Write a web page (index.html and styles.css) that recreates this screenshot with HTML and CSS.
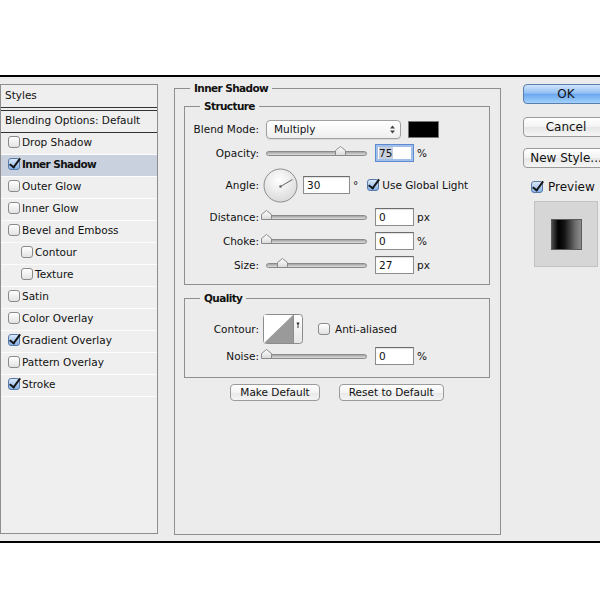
FILE: index.html
```html
<!DOCTYPE html>
<html>
<head>
<meta charset="utf-8">
<title>Layer Style</title>
<link rel="stylesheet" href="styles.css">
</head>
<body>
<div class="top"></div>
<div class="dialog">
  <div class="panel">
    <div class="phead">Styles</div>
    <div class="blend">Blending Options: Default</div>
    <div class="row"><span class="cb"></span>Drop Shadow</div>
    <div class="row sel"><span class="cb on"></span>Inner Shadow</div>
    <div class="row"><span class="cb"></span>Outer Glow</div>
    <div class="row"><span class="cb"></span>Inner Glow</div>
    <div class="row"><span class="cb"></span>Bevel and Emboss</div>
    <div class="row sub"><span class="cb"></span>Contour</div>
    <div class="row sub"><span class="cb"></span>Texture</div>
    <div class="row"><span class="cb"></span>Satin</div>
    <div class="row"><span class="cb"></span>Color Overlay</div>
    <div class="row"><span class="cb on"></span>Gradient Overlay</div>
    <div class="row"><span class="cb"></span>Pattern Overlay</div>
    <div class="row"><span class="cb on"></span>Stroke</div>
  </div>

  <fieldset class="fs outer">
    <legend>Inner Shadow</legend>
    <div class="outer-body">
      <fieldset class="fs">
        <legend>Structure</legend>
        <div class="structure-body">
          <div class="frow">
            <span class="lbl">Blend Mode:</span>
            <div class="select"><span>Multiply</span>
              <svg class="arrows" width="5" height="9" viewBox="0 0 5 9"><path d="M0 3.5L2.5 0.5L5 3.5Z M0 5.5L2.5 8.5L5 5.5Z" fill="#444"/></svg>
            </div>
            <span class="swatch"></span>
          </div>
          <div class="frow">
            <span class="lbl">Opacity:</span>
            <div class="slider"><svg class="thumb" style="left:75%" width="11" height="10" viewBox="0 0 11 10"><defs><linearGradient id="tg1" x1="0" y1="0" x2="0" y2="1"><stop offset="0" stop-color="#fff"/><stop offset="1" stop-color="#d9d9d9"/></linearGradient></defs><path d="M0.5 9.5V4.5L5.5 0.5L10.5 4.5V9.5Z" fill="url(#tg1)" stroke="#8a8a8a"/></svg></div>
            <div class="num focus"><span class="hl">75</span></div>
            <span class="unit">%</span>
          </div>
          <div class="frow tall">
            <span class="lbl">Angle:</span>
            <svg class="dial" width="35" height="35" viewBox="0 0 35 35">
              <defs><radialGradient id="dg" cx="0.45" cy="0.35" r="0.7"><stop offset="0" stop-color="#ffffff"/><stop offset="1" stop-color="#d8d8d8"/></radialGradient></defs>
              <circle cx="17.5" cy="17.5" r="16.5" fill="url(#dg)" stroke="#8d8d8d"/>
              <line x1="17.5" y1="18.5" x2="29.5" y2="11.5" stroke="#666" stroke-width="1"/>
              <circle cx="17.5" cy="18.5" r="1.3" fill="#666"/>
            </svg>
            <div class="num wide">30</div>
            <span class="deg">°</span>
            <span class="cb on gl"></span>
            <span class="gltext">Use Global Light</span>
          </div>
          <div class="frow">
            <span class="lbl">Distance:</span>
            <div class="slider"><svg class="thumb" style="left:0%" width="11" height="10" viewBox="0 0 11 10"><defs><linearGradient id="tg2" x1="0" y1="0" x2="0" y2="1"><stop offset="0" stop-color="#fff"/><stop offset="1" stop-color="#d9d9d9"/></linearGradient></defs><path d="M0.5 9.5V4.5L5.5 0.5L10.5 4.5V9.5Z" fill="url(#tg2)" stroke="#8a8a8a"/></svg></div>
            <div class="num">0</div>
            <span class="unit">px</span>
          </div>
          <div class="frow">
            <span class="lbl">Choke:</span>
            <div class="slider"><svg class="thumb" style="left:0%" width="11" height="10" viewBox="0 0 11 10"><defs><linearGradient id="tg3" x1="0" y1="0" x2="0" y2="1"><stop offset="0" stop-color="#fff"/><stop offset="1" stop-color="#d9d9d9"/></linearGradient></defs><path d="M0.5 9.5V4.5L5.5 0.5L10.5 4.5V9.5Z" fill="url(#tg3)" stroke="#8a8a8a"/></svg></div>
            <div class="num">0</div>
            <span class="unit">%</span>
          </div>
          <div class="frow">
            <span class="lbl">Size:</span>
            <div class="slider"><svg class="thumb" style="left:16%" width="11" height="10" viewBox="0 0 11 10"><defs><linearGradient id="tg4" x1="0" y1="0" x2="0" y2="1"><stop offset="0" stop-color="#fff"/><stop offset="1" stop-color="#d9d9d9"/></linearGradient></defs><path d="M0.5 9.5V4.5L5.5 0.5L10.5 4.5V9.5Z" fill="url(#tg4)" stroke="#8a8a8a"/></svg></div>
            <div class="num">27</div>
            <span class="unit">px</span>
          </div>
        </div>
      </fieldset>

      <fieldset class="fs quality">
        <legend>Quality</legend>
        <div class="quality-body">
          <div class="frow contour-row">
            <span class="lbl">Contour:</span>
            <svg class="contour" width="40" height="30" viewBox="0 0 40 30">
              <defs><linearGradient id="cg" x1="0" y1="0" x2="0" y2="1"><stop offset="0" stop-color="#fff"/><stop offset="1" stop-color="#e6e6e6"/></linearGradient></defs>
              <rect x="0.5" y="0.5" width="39" height="29" rx="3" fill="url(#cg)" stroke="#8c8c8c"/>
              <rect x="1" y="1" width="29" height="28" fill="#fff"/>
              <path d="M1 29L30 1V29Z" fill="#9a9a9a"/>
              <line x1="30.5" y1="1" x2="30.5" y2="29" stroke="#8c8c8c"/>
              <path d="M33.5 8.5h3l-1.5 4z" fill="#333"/>
              <line x1="35" y1="12" x2="35" y2="14" stroke="#333"/>
            </svg>
            <span class="cb aa"></span>
            <span class="aatext">Anti-aliased</span>
          </div>
          <div class="frow">
            <span class="lbl">Noise:</span>
            <div class="slider"><svg class="thumb" style="left:0%" width="11" height="10" viewBox="0 0 11 10"><defs><linearGradient id="tg5" x1="0" y1="0" x2="0" y2="1"><stop offset="0" stop-color="#fff"/><stop offset="1" stop-color="#d9d9d9"/></linearGradient></defs><path d="M0.5 9.5V4.5L5.5 0.5L10.5 4.5V9.5Z" fill="url(#tg5)" stroke="#8a8a8a"/></svg></div>
            <div class="num">0</div>
            <span class="unit">%</span>
          </div>
        </div>
      </fieldset>

      <div class="btnrow">
        <button class="btn">Make Default</button>
        <button class="btn">Reset to Default</button>
      </div>
    </div>
  </fieldset>

  <div class="side">
    <div class="pbtn ok">OK</div>
    <div class="pbtn cancel">Cancel</div>
    <div class="pbtn newstyle">New Style...</div>
    <div class="prev-row"><span class="cb on"></span><span>Preview</span></div>
    <div class="preview"><span class="pv"></span></div>
  </div>
</div>
</body>
</html>
```
FILE: styles.css
```css
* { box-sizing: border-box; }
html, body { margin: 0; background: #fff; }
body {
  width: 600px;
  height: 600px;
  overflow: hidden;
  font-family: "DejaVu Sans", "Liberation Sans", sans-serif;
  font-size: 10.5px;
  color: #111;
}
.top { height: 75px; }
.dialog {
  display: flex;
  align-items: flex-start;
  width: 640px;
  height: 468px;
  border-top: 2px solid #000;
  border-bottom: 2px solid #000;
  background: #ececec;
}

/* left styles list */
.panel {
  flex: none;
  width: 158px;
  height: 450px;
  margin-top: 7px;
  border: 1px solid #8e8e8e;
  background: #efefef;
}
.phead {
  height: 23px;
  border-bottom: 1px solid #333;
  padding: 0 0 2px 4px;
  display: flex;
  align-items: center;
}
.blend {
  margin-top: 2px;
  height: 23px;
  border-top: 1px solid #333;
  border-bottom: 1px solid #333;
  padding: 0 0 3px 4px;
  display: flex;
  align-items: center;
}
.row {
  height: 22px;
  border-bottom: 1px solid #fcfcfc;
  display: flex;
  align-items: center;
  padding: 0 0 3px 7px;
  gap: 2px;
}
.row.sub { padding-left: 20px; }
.row.sel {
  background: #c8d1dd;
  font-weight: bold;
  letter-spacing: -0.6px;
}

/* checkbox */
.cb {
  flex: none;
  position: relative;
  width: 12px;
  height: 12px;
  border: 1px solid #8a8a8a;
  border-radius: 3px;
  background: linear-gradient(#ffffff, #e2e2e2);
}
.cb.on {
  background: linear-gradient(#d9e8fa, #86b0e6);
  border-color: #587aa8;
}
.cb.on::after {
  content: "";
  position: absolute;
  left: 3px;
  top: -3px;
  width: 4px;
  height: 10px;
  border: solid #151515;
  border-width: 0 2px 2px 0;
  transform: rotate(36deg);
}

/* fieldsets */
.fs {
  margin: 0;
  padding: 0;
  border: 1px solid #8f8f8f;
  min-width: 0;
}
.fs > legend {
  margin-left: 15px;
  padding: 0 4px;
  font-weight: bold;
  letter-spacing: -0.6px;
  line-height: 14px;
}
.outer {
  flex: none;
  width: 327px;
  height: 454px;
  margin: 4px 0 0 16px;
}
.outer-body { padding: 4px 10px 0 9px; }
.structure-body { padding: 4px 0 7px 0; }
.quality { margin-top: 6px; }
.quality-body { padding: 8px 0 9px 0; }

.frow {
  display: flex;
  align-items: center;
  height: 24px;
}
.frow.tall { height: 40px; }
.frow.contour-row { height: 31px; }
.lbl {
  flex: none;
  width: 74px;
  text-align: right;
}

.select {
  flex: none;
  width: 135px;
  height: 19px;
  margin-left: 7px;
  padding: 0 5px 0 7px;
  border: 1px solid #a0a0a0;
  border-radius: 4px;
  background: linear-gradient(#ffffff, #efefef);
  box-shadow: 0 1px 1px rgba(0, 0, 0, 0.08);
  display: flex;
  align-items: center;
  justify-content: space-between;
}
.swatch {
  flex: none;
  width: 31px;
  height: 17px;
  margin-left: 7px;
  background: #000;
  border: 1px solid #777;
}

.slider {
  flex: none;
  position: relative;
  width: 101px;
  height: 5px;
  margin-left: 7px;
  border: 1px solid #8a8a8a;
  border-radius: 3px;
  background: linear-gradient(#a4a4a4, #dddddd);
}
.thumb {
  position: absolute;
  top: -6px;
  margin-left: -6px;
}

.num {
  flex: none;
  width: 39px;
  height: 18px;
  margin-left: 8px;
  padding-left: 3px;
  border: 1px solid #8c8c8c;
  border-top-color: #6c6c6c;
  background: #fff;
  box-shadow: inset 0 1px 1px rgba(0, 0, 0, 0.12);
  display: flex;
  align-items: center;
}
.num.focus {
  border: 1px solid #5d8ad0;
  box-shadow: inset 0 0 0 2px #a2bfe9;
  padding-left: 3px;
}
.hl { background: #c7d0dc; padding-right: 1px; }
.num.wide { width: 47px; margin-left: 5px; }
.unit { margin-left: 3px; }

.dial { flex: none; margin-left: 4px; }
.deg { margin-left: 3px; }
.cb.gl { margin-left: 9px; }
.gltext { margin-left: 3px; }

.contour { flex: none; margin-left: 4px; }
.cb.aa { margin-left: 15px; }
.aatext { margin-left: 5px; }

.btnrow {
  display: flex;
  justify-content: center;
  gap: 19px;
  margin-top: 6px;
}
.btn {
  height: 17px;
  padding: 0 9px;
  border: 1px solid #9a9a9a;
  border-radius: 4px;
  background: linear-gradient(#ffffff, #f3f3f3 50%, #e8e8e8 51%, #f4f4f4);
  font-family: inherit;
  font-size: 10.5px;
  color: #111;
  line-height: 15px;
}

/* right column */
.side {
  flex: none;
  width: 86px;
  margin: 7px 0 0 22px;
  font-size: 12px;
}
.pbtn {
  height: 20px;
  border: 1px solid #9a9a9a;
  border-radius: 4px;
  background: linear-gradient(#ffffff, #f3f3f3 50%, #e6e6e6 51%, #f5f5f5);
  display: flex;
  align-items: center;
  justify-content: center;
  white-space: nowrap;
}
.pbtn.ok {
  border-color: #5a7eae;
  background: linear-gradient(#cfe4fb, #93c0f3 45%, #6ba7ee 52%, #a3d2fb);
}
.pbtn.cancel { margin-top: 13px; }
.pbtn.newstyle { margin-top: 11px; }
.prev-row {
  margin: 11px 0 0 8px;
  height: 16px;
  display: flex;
  align-items: center;
  gap: 5px;
}
.preview {
  margin: 6px 0 0 11px;
  width: 64px;
  height: 66px;
  background: #d6d6d6;
  border: 1px solid #c2c2c2;
  display: flex;
  align-items: center;
  justify-content: center;
}
.pv {
  width: 31px;
  height: 31px;
  border: 1px solid #5a5a5a;
  background: linear-gradient(to right, #4a4a4a 0%, #000 22%, #121212 42%, #707070 82%, #8c8c8c 100%);
}
```
